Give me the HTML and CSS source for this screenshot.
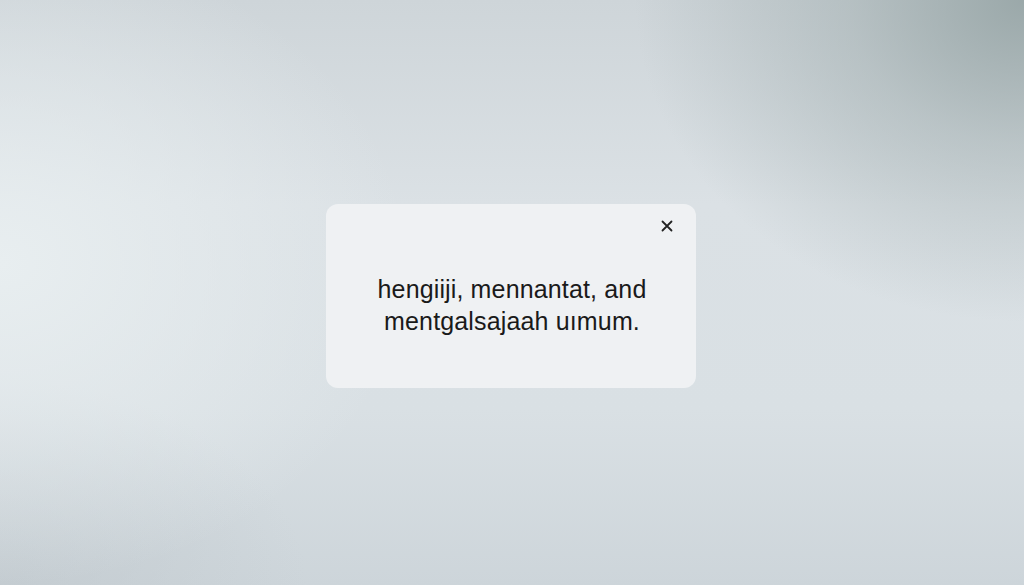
FILE: index.html
```html
<!DOCTYPE html>
<html lang="en">
<head>
<meta charset="utf-8">
<title>Notice</title>
<link rel="stylesheet" href="styles.css">
</head>
<body>
<main class="stage">
  <section class="card" role="dialog" aria-label="Notice">
    <div class="card-head">
      <button class="close" aria-label="Close">
        <svg viewBox="0 0 12 12" width="12" height="12" aria-hidden="true">
          <path d="M1.5 1.5 L10.5 10.5 M10.5 1.5 L1.5 10.5" stroke="#222" stroke-width="1.8" stroke-linecap="round" fill="none"/>
        </svg>
      </button>
    </div>
    <p class="message">hengiĳi, mennantat, and<br>mentgalsajaah uımum.</p>
  </section>
</main>
</body>
</html>
```

FILE: styles.css
```css
html, body {
  margin: 0;
  height: 100%;
}

body {
  font-family: "Liberation Sans", Arial, sans-serif;
  background-color: #d8dee2;
  background-image:
    radial-gradient(ellipse 38% 55% at 100% 0%, rgba(152, 166, 167, 0.95) 0%, rgba(152, 166, 167, 0.45) 45%, rgba(152, 166, 167, 0) 100%),
    radial-gradient(ellipse 40% 55% at 0% 45%, rgba(232, 238, 240, 1) 0%, rgba(232, 238, 240, 0) 100%),
    radial-gradient(ellipse 30% 35% at 0% 100%, rgba(192, 200, 205, 0.7) 0%, rgba(192, 200, 205, 0) 100%),
    linear-gradient(180deg, #ced5d9 0%, #dbe1e5 35%, #d9e0e4 70%, #cdd5da 100%);
  overflow: hidden;
}

.stage {
  height: 100%;
  display: flex;
  align-items: center;
  justify-content: center;
  padding-top: 7px;
  box-sizing: border-box;
}

.card {
  width: 370px;
  height: 184px;
  margin-left: -2px;
  box-sizing: border-box;
  background: #eff1f3;
  border-radius: 12px;
  display: flex;
  flex-direction: column;
  padding: 10px 17px 0 20px;
}

.card-head {
  display: flex;
  justify-content: flex-end;
}

.close {
  width: 24px;
  height: 24px;
  padding: 0;
  border: 0;
  background: transparent;
  display: flex;
  align-items: center;
  justify-content: center;
  cursor: pointer;
}

.message {
  margin: 35px 0 0;
  text-align: center;
  font-size: 25px;
  line-height: 32px;
  letter-spacing: 0.15px;
  color: #1a1a1a;
  padding-right: 1px;
}
```
